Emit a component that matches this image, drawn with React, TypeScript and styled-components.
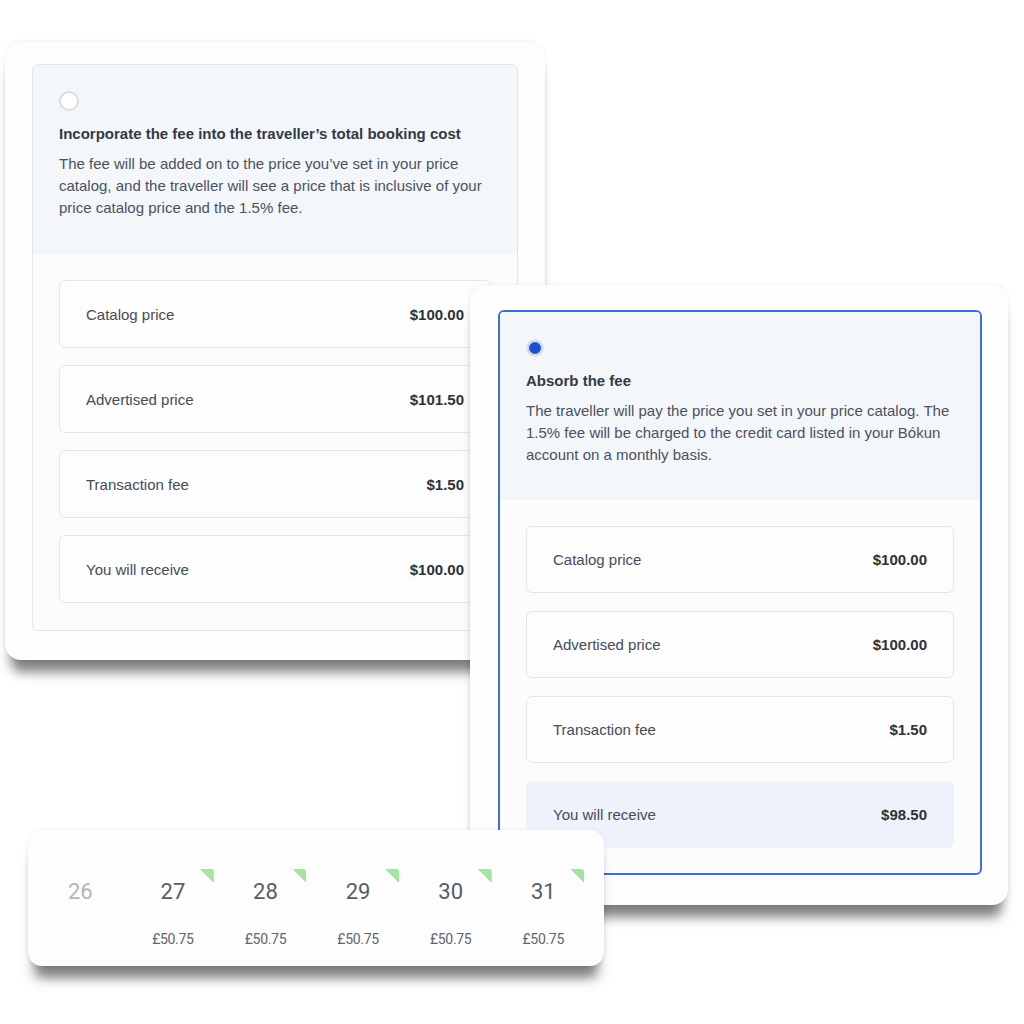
import styled, { createGlobalStyle } from 'styled-components';

const GlobalStyle = createGlobalStyle`
  body {
    margin: 0;
    background: #ffffff;
    font-family: "Liberation Sans", Arial, sans-serif;
  }
`;

const Canvas = styled.div`
  position: relative;
  width: 1024px;
  height: 1024px;
  overflow: hidden;
  background: #ffffff;
`;

// floating panels on the collage canvas
const Panel = styled.div<{ x: number; y: number; w: number; h: number; pad: string }>`
  position: absolute;
  left: ${({ x }) => x}px;
  top: ${({ y }) => y}px;
  width: ${({ w }) => w}px;
  height: ${({ h }) => h}px;
  box-sizing: border-box;
  padding: ${({ pad }) => pad};
  background: #fdfdfd;
  border-radius: 16px;
  box-shadow: 0 18px 12px -6px rgba(0, 0, 0, 0.5), 0 0 5px rgba(0, 0, 0, 0.07);
`;

const OptionBox = styled.div<{ selected?: boolean }>`
  display: flex;
  flex-direction: column;
  height: 100%;
  box-sizing: border-box;
  border: ${({ selected }) => (selected ? '2px solid #3d6fd8' : '1px solid #e2e5e9')};
  border-radius: 6px;
  overflow: hidden;
  background: #fcfcfc;
`;

const OptionHeader = styled.div<{ bottom: number }>`
  display: flex;
  flex-direction: column;
  align-items: flex-start;
  padding: 26px 26px ${({ bottom }) => bottom}px 26px;
  background: #f4f7fa;
`;

const Radio = styled.span<{ checked?: boolean }>`
  box-sizing: border-box;
  width: ${({ checked }) => (checked ? 18 : 20)}px;
  height: ${({ checked }) => (checked ? 18 : 20)}px;
  margin: ${({ checked }) => (checked ? '1px 0' : '0')};
  border-radius: 50%;
  border: 2px solid ${({ checked }) => (checked ? '#e1e3e6' : '#dcdcdc')};
  background: ${({ checked }) => (checked ? '#1d50cf' : '#ffffff')};
  box-shadow: ${({ checked }) => (checked ? 'inset 0 0 0 1px #f3f5f8' : 'none')};
`;

const Title = styled.h3`
  margin: 14px 0 0;
  font-size: 15px;
  line-height: 18px;
  font-weight: 700;
  color: #333944;
`;

const Description = styled.p`
  margin: 10px 0 0;
  font-size: 15px;
  line-height: 22px;
  color: #4b525e;
`;

const Rows = styled.div<{ gap: number }>`
  display: flex;
  flex-direction: column;
  gap: ${({ gap }) => gap}px;
  padding: 26px;
`;

const Row = styled.div<{ highlight?: boolean; h: number; w?: number }>`
  display: flex;
  align-items: center;
  justify-content: space-between;
  flex-shrink: 0;
  box-sizing: border-box;
  width: ${({ w }) => (w ? `${w}px` : 'auto')};
  height: ${({ h }) => h}px;
  padding: 0 26px;
  border-radius: 6px;
  border: 1px solid ${({ highlight }) => (highlight ? '#eef3fb' : '#e5e6e8')};
  background: ${({ highlight }) => (highlight ? '#eef3fb' : '#fdfdfd')};
  font-size: 15px;
`;

const Label = styled.span`
  color: #454c57;
`;

const Value = styled.span`
  font-weight: 700;
  color: #2c323a;
`;

const CalendarPanel = styled(Panel)`
  display: grid;
  grid-template-columns: repeat(6, 92.6px);
  border-radius: 14px;
  font-family: Roboto, "Liberation Sans", Arial, sans-serif;
`;

const Day = styled.div`
  position: relative;
  display: flex;
  flex-direction: column;
  align-items: center;
`;

const DayNumber = styled.span<{ muted?: boolean }>`
  margin-top: 48px;
  font-size: 22px;
  line-height: 28px;
  color: ${({ muted }) => (muted ? '#b3b5b8' : '#575d67')};
`;

const DayPrice = styled.span`
  margin-top: 24px;
  font-size: 14px;
  line-height: 18px;
  letter-spacing: -0.3px;
  color: #5f6570;
`;

const Flag = styled.span`
  position: absolute;
  top: 39px;
  left: calc(50% + 27px);
  width: 14px;
  height: 14px;
  background: #a4e3a0;
  border-top-right-radius: 3px;
  clip-path: polygon(0 0, 100% 0, 100% 100%);
`;

type Line = { label: string; value: string; highlight?: boolean };

const leftLines: Line[] = [
  { label: 'Catalog price', value: '$100.00' },
  { label: 'Advertised price', value: '$101.50' },
  { label: 'Transaction fee', value: '$1.50' },
  { label: 'You will receive', value: '$100.00' },
];

const rightLines: Line[] = [
  { label: 'Catalog price', value: '$100.00' },
  { label: 'Advertised price', value: '$100.00' },
  { label: 'Transaction fee', value: '$1.50' },
  { label: 'You will receive', value: '$98.50', highlight: true },
];

const days = [
  { day: '26', price: '', muted: true },
  { day: '27', price: '£50.75' },
  { day: '28', price: '£50.75' },
  { day: '29', price: '£50.75' },
  { day: '30', price: '£50.75' },
  { day: '31', price: '£50.75' },
];

const App = () => {
  return (
    <>
      <GlobalStyle />
      <Canvas>
        <Panel x={5} y={42} w={540} h={618} pad="22px 27px 29px 27px">
          <OptionBox>
            <OptionHeader bottom={35}>
              <Radio />
              <Title>Incorporate the fee into the traveller’s total booking cost</Title>
              <Description>
                The fee will be added on to the price you’ve set in your price catalog, and the
                traveller will see a price that is inclusive of your price catalog price and the
                1.5% fee.
              </Description>
            </OptionHeader>
            <Rows gap={17}>
              {leftLines.map((l) => (
                <Row key={l.label} h={68} w={432}>
                  <Label>{l.label}</Label>
                  <Value>{l.value}</Value>
                </Row>
              ))}
            </Rows>
          </OptionBox>
        </Panel>

        <Panel x={470} y={285} w={538} h={620} pad="25px 26px 30px 28px">
          <OptionBox selected>
            <OptionHeader bottom={34}>
              <Radio checked />
              <Title>Absorb the fee</Title>
              <Description>
                The traveller will pay the price you set in your price catalog. The 1.5% fee will
                be charged to the credit card listed in your Bókun account on a monthly basis.
              </Description>
            </OptionHeader>
            <Rows gap={18}>
              {rightLines.map((l) => (
                <Row key={l.label} h={67} highlight={l.highlight}>
                  <Label>{l.label}</Label>
                  <Value>{l.value}</Value>
                </Row>
              ))}
            </Rows>
          </OptionBox>
        </Panel>

        <CalendarPanel x={28} y={830} w={576} h={136} pad="0 0 0 6px">
          {days.map((d) => (
            <Day key={d.day}>
              {!d.muted && <Flag />}
              <DayNumber muted={d.muted}>{d.day}</DayNumber>
              {d.price && <DayPrice>{d.price}</DayPrice>}
            </Day>
          ))}
        </CalendarPanel>
      </Canvas>
    </>
  );
};

export default App;
